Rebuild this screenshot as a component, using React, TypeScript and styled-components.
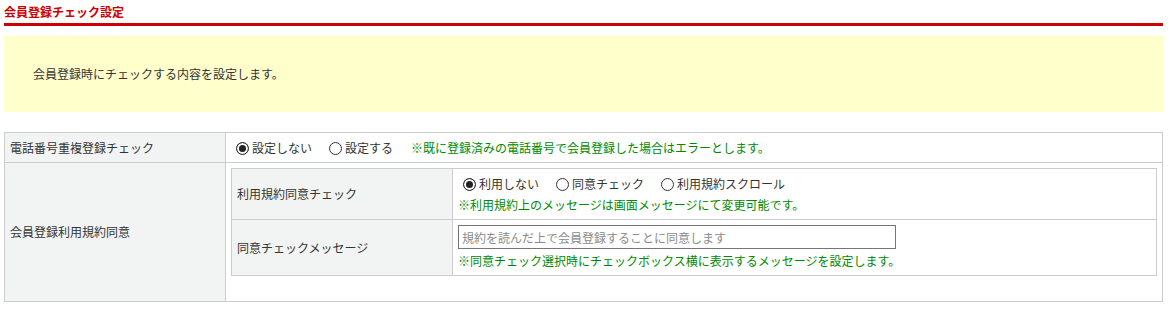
import React from 'react';
import styled, {createGlobalStyle} from 'styled-components';

const GlobalStyle = createGlobalStyle`
  body {
    margin: 0;
    background: #fff;
    font-family: "Noto Sans CJK JP", "Noto Sans", sans-serif;
    font-size: 12px;
    color: #333;
  }
`;

export default function App() {
    return (
        <>
            <GlobalStyle/>
            <Page>
                <Title>会員登録チェック設定</Title>
                <InfoBox>会員登録時にチェックする内容を設定します。</InfoBox>
                <FormTable>
                    <tbody>
                    <tr>
                        <Th>電話番号重複登録チェック</Th>
                        <Td>
                            <RadioLabel><Radio name="tel" defaultChecked/>設定しない</RadioLabel>
                            <RadioLabel><Radio name="tel"/>設定する</RadioLabel>
                            <Note $inline>※既に登録済みの電話番号で会員登録した場合はエラーとします。</Note>
                        </Td>
                    </tr>
                    <tr>
                        <Th>会員登録利用規約同意</Th>
                        <Td>
                            <InnerTable>
                                <tbody>
                                <tr>
                                    <Th>利用規約同意チェック</Th>
                                    <Td>
                                        <RadioLabel><Radio name="agree" defaultChecked/>利用しない</RadioLabel>
                                        <RadioLabel><Radio name="agree"/>同意チェック</RadioLabel>
                                        <RadioLabel><Radio name="agree"/>利用規約スクロール</RadioLabel>
                                        <Note>※利用規約上のメッセージは画面メッセージにて変更可能です。</Note>
                                    </Td>
                                </tr>
                                <tr>
                                    <Th>同意チェックメッセージ</Th>
                                    <Td>
                                        <TextInput type="text" placeholder="規約を読んだ上で会員登録することに同意します"/>
                                        <Note>※同意チェック選択時にチェックボックス横に表示するメッセージを設定します。</Note>
                                    </Td>
                                </tr>
                                </tbody>
                            </InnerTable>
                        </Td>
                    </tr>
                    </tbody>
                </FormTable>
            </Page>
        </>
    );
}

const Page = styled.div`
  width: 1159px;
  padding: 4px;
`

const Title = styled.h1`
  margin: 0;
  font-size: 12px;
  font-weight: bold;
  line-height: 16px;
  color: #cc0000;
  padding-bottom: 3px;
  border-bottom: 3px solid #cc0000;
`

const InfoBox = styled.div`
  margin-top: 10px;
  background: #ffffcc;
  padding: 29px 29px;
  line-height: 18px;
  color: #333;
`

const FormTable = styled.table`
  margin-top: 20px;
  width: 100%;
  border-collapse: collapse;
  border: 1px solid #cccccc;
`

const InnerTable = styled(FormTable)`
  margin: 0 0 20px;
`

const Th = styled.th`
  width: 210px;
  padding: 5px;
  background: #f2f3f3;
  border: 1px solid #cccccc;
  text-align: left;
  font-weight: normal;
  vertical-align: middle;
  line-height: 18px;
`

const Td = styled.td`
  padding: 5px;
  border: 1px solid #cccccc;
  vertical-align: top;
  line-height: 19px;
`

const RadioLabel = styled.label`
  display: inline-block;
  margin-right: 12px;
  line-height: 19px;
`

const Radio = styled.input.attrs({type: 'radio'})`
  appearance: none;
  box-sizing: border-box;
  width: 13px;
  height: 13px;
  margin: 3px 3px 0 5px;
  border: 1px solid #333;
  border-radius: 50%;
  background: #fff;
  vertical-align: -2px;

  &:checked {
    background: #222;
    box-shadow: inset 0 0 0 2px #fff;
  }
`

const Note = styled.div<{ $inline?: boolean }>`
  display: ${p => (p.$inline ? 'inline' : 'block')};
  margin-left: ${p => (p.$inline ? '6px' : '0')};
  margin-top: ${p => (p.$inline ? '0' : '3px')};
  color: #008a00;
  line-height: 18px;
`

const TextInput = styled.input`
  display: block;
  box-sizing: border-box;
  width: 438px;
  height: 24px;
  margin: 0 0 0;
  padding: 1px 3px;
  border: 1px solid #767676;
  font-family: inherit;
  font-size: 12px;
  color: #333;

  &::placeholder {
    color: #8a8a8a;
  }
`
